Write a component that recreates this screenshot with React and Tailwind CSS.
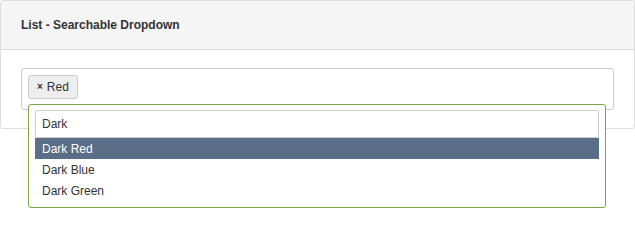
import { useState } from "react";

const colors = ["Dark Red", "Dark Blue", "Dark Green"];

export default function App() {
  const [query, setQuery] = useState("Dark");
  const [active, setActive] = useState(0);

  return (
    <div className="w-[635px] h-[209px] bg-white font-['Liberation_Sans',Arial,sans-serif] text-[12px] text-[#333]">
      <div className="border border-[#ddd] rounded-[3px]">
        <div className="h-[49px] flex items-center px-5 bg-[#f5f5f5] border-b border-[#ddd] font-bold">
          List - Searchable Dropdown
        </div>
        <div className="px-5 py-[18px]">
          <div className="relative h-[42px] border border-[#ccc] rounded-[3px] px-[6px] pt-[6px]">
            <span className="inline-flex items-center h-6 px-[8px] gap-[4px] bg-[#eee] border border-[#ccc] rounded-[3px]">
              <span className="text-[10px] font-bold leading-none">×</span>
              <span>Red</span>
            </span>
            <div className="absolute left-[6px] top-[35px] w-[578px] border border-[#78a844] rounded-[3px] bg-white px-[6px] pt-[5px] pb-[6px] z-10">
              <input
                value={query}
                onChange={(e) => setQuery(e.target.value)}
                className="w-full h-[28px] px-[6px] border border-[#ccc] rounded-[2px] outline-none text-[12px] text-[#333]"
              />
              <ul>
                {colors
                  .filter((c) => c.toLowerCase().includes(query.toLowerCase()))
                  .map((c, i) => (
                    <li
                      key={c}
                      onMouseEnter={() => setActive(i)}
                      className={
                        i === active
                          ? "h-[21px] flex items-center px-[7px] bg-[#5a6e87] text-white"
                          : "h-[21px] flex items-center px-[7px]"
                      }
                    >
                      {c}
                    </li>
                  ))}
              </ul>
            </div>
          </div>
        </div>
      </div>
    </div>
  );
}
